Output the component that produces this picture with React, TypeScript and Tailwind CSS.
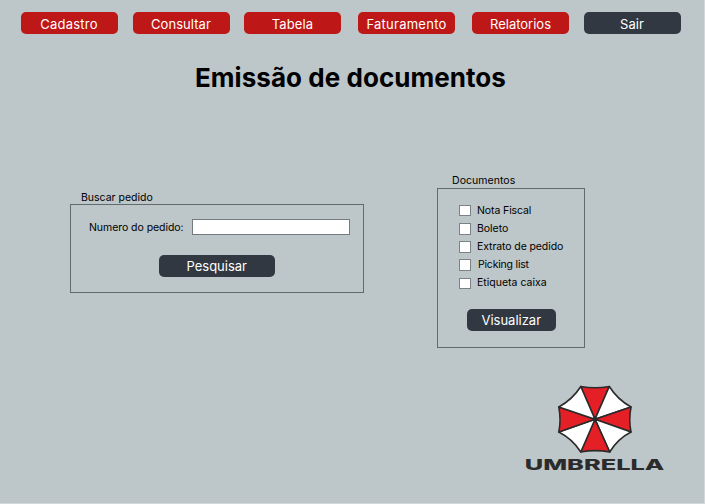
import React from 'react';

const navItems = [
  { label: 'Cadastro', tone: 'bg-[#be1717]', gap: 'ml-[20.5px]', tracking: 'tracking-[0.25px]' },
  { label: 'Consultar', tone: 'bg-[#be1717]', gap: 'ml-[15px]', tracking: 'tracking-[0.05px]' },
  { label: 'Tabela', tone: 'bg-[#be1717]', gap: 'ml-[14.5px]', tracking: 'tracking-[0.1px]' },
  { label: 'Faturamento', tone: 'bg-[#be1717]', gap: 'ml-[17px]', tracking: 'tracking-[0.25px]' },
  { label: 'Relatorios', tone: 'bg-[#be1717]', gap: 'ml-[17px]', tracking: 'tracking-[0px]' },
  { label: 'Sair', tone: 'bg-[#313842]', gap: 'ml-[14.5px]', tracking: 'tracking-[0.1px]' },
];

const documents = [
  { label: 'Nota Fiscal', tracking: 'tracking-[-0.1px]' },
  { label: 'Boleto', tracking: 'tracking-[-0.05px]' },
  { label: 'Extrato de pedido', tracking: 'tracking-[-0.1px]' },
  { label: 'Picking list', tracking: 'pl-px tracking-[-0.2px]' },
  { label: 'Etiqueta caixa', tracking: 'tracking-[0px]' },
];

function Logo() {
  return (
    <svg width="142" height="90" viewBox="523 384 142 90" className="block">
      <g stroke="#2b2b2b" strokeWidth="1.6" strokeLinejoin="round">
        <path fill="#e51f26" d="M595 419.3 580.8 386.5Q595 389 609.3 386.5Z" />
        <path fill="#fff" d="M595 419.3 609.3 386.5Q617.5 399.5 631 407Z" />
        <path fill="#e51f26" d="M595 419.3 631 407Q628.5 419.5 631 432Z" />
        <path fill="#fff" d="M595 419.3 631 432Q617.5 439 609.7 452Z" />
        <path fill="#e51f26" d="M595 419.3 609.7 452Q595 449.3 580.8 452Z" />
        <path fill="#fff" d="M595 419.3 580.8 452Q572.5 439 558.8 432Z" />
        <path fill="#e51f26" d="M595 419.3 558.8 432Q561.3 419.5 558.8 407Z" />
        <path fill="#fff" d="M595 419.3 558.8 407Q572.5 399.5 580.8 386.5Z" />
      </g>
      <circle cx="595" cy="419.3" r="2.4" fill="#2b2b2b" />
      <text
        x="524.8"
        y="470"
        textLength="139.5"
        lengthAdjust="spacingAndGlyphs"
        className="fill-[#2b2b2b] font-['Inter',sans-serif] text-[15px] font-extrabold"
      >
        UMBRELLA
      </text>
    </svg>
  );
}

export default function App() {
  return (
    <div className="h-[504px] w-[705px] overflow-hidden border-r border-b border-[#d3d9db] bg-[#bdc6c9] font-['Inter',sans-serif] text-black">
      <nav className="flex h-[34.5px] pt-[12.4px]">
        {navItems.map((item) => (
          <button
            key={item.label}
            className={`h-[22px] w-[97px] shrink-0 rounded-[5px] pt-px text-[13px] leading-[22px] text-white ${item.tone} ${item.gap} ${item.tracking}`}
          >
            {item.label}
          </button>
        ))}
      </nav>

      <h1 className="mt-[24.5px] ml-[195px] h-[38px] text-[26px] leading-[38px] font-bold whitespace-nowrap tracking-[0.05px]">
        Emissão de documentos
      </h1>

      <main className="flex h-[276px] items-start pl-[70px]">
        <section className="mt-[92px] w-[294px]">
          <h2 className="h-[15px] pl-[11px] text-[10.5px] leading-[17px] tracking-[0px]">Buscar pedido</h2>
          <div className="h-[89px] border border-[#626a6d] pt-[14px]">
            <label className="flex h-4 items-center pl-[18px] text-[10.5px] tracking-[-0.05px]">
              <span className="w-[103px] pt-px whitespace-nowrap">Numero do pedido:</span>
              <input className="h-4 w-[158.4px] border border-[#747b7e] bg-white" />
            </label>
            <button className="mt-5 ml-[88px] block h-[22px] w-[115.5px] rounded-[5px] bg-[#313842] text-[13px] leading-[22px] text-white">
              Pesquisar
            </button>
          </div>
        </section>

        <section className="mt-[76px] ml-[73px] w-[148px]">
          <h2 className="h-[15px] pl-[15px] text-[10.5px] leading-[16px] tracking-[0.05px]">Documentos</h2>
          <div className="h-[160px] border border-[#626a6d] pt-[12.5px]">
            <div className="ml-[21px]">
              {documents.map((doc) => (
                <label key={doc.label} className="flex h-[18.2px] items-center text-[10.5px] whitespace-nowrap">
                  <span className="mr-1.5 h-[11.5px] w-3 border border-[#7b8285] bg-white" />
                  <span className={doc.tracking}>{doc.label}</span>
                </label>
              ))}
            </div>
            <button className="mt-[16.5px] ml-[28.5px] block h-[22px] w-[89.5px] rounded-[5px] bg-[#313842] text-[13px] leading-[22px] text-white">
              Visualizar
            </button>
          </div>
        </section>
      </main>

      <footer className="mt-[11px] ml-[523px]">
        <Logo />
      </footer>
    </div>
  );
}
